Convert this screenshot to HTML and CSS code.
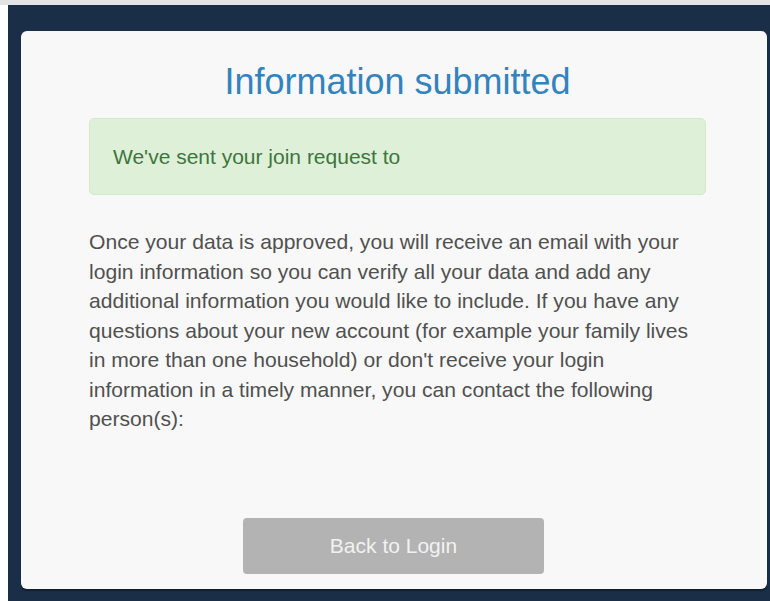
FILE: index.html
```html
<!DOCTYPE html>
<html lang="en">
<head>
<meta charset="utf-8">
<title>Information submitted</title>
<link rel="stylesheet" href="styles.css">
</head>
<body>
  <div class="screen">
    <div class="card">
      <div class="content">
        <h1 class="title">Information submitted</h1>
        <div class="alert">We've sent your join request to</div>
        <p class="message">Once your data is approved, you will receive an email with your login information so you can verify all your data and add any additional information you would like to include. If you have any questions about your new account (for example your family lives in more than one household) or don't receive your login information in a timely manner, you can contact the following person(s):</p>
        <div class="actions">
          <button class="btn" type="button">Back to Login</button>
        </div>
      </div>
    </div>
  </div>
</body>
</html>
```

FILE: styles.css
```css
html, body {
  margin: 0;
  padding: 0;
  height: 100%;
}

body {
  background: #ffffff;
  border-top: 5px solid #e4e4e4;
  box-sizing: border-box;
  font-family: "Liberation Sans", Arial, sans-serif;
  overflow: hidden;
}

.screen {
  margin-left: 8px;
  height: 100%;
  background: #1b2e47;
  padding: 26px 3px 0 13px;
  box-sizing: border-box;
}

.card {
  height: 558px;
  background: #f8f8f8;
  border-radius: 6px;
  box-shadow: 0 2px 1px rgba(0, 0, 0, 0.35);
  box-sizing: border-box;
  padding-left: 68px;
}

.content {
  width: 617px;
  display: flex;
  flex-direction: column;
  height: 100%;
}

.title {
  margin: 0;
  padding-top: 30px;
  text-align: center;
  font-weight: normal;
  font-size: 36px;
  line-height: 42px;
  color: #3383bd;
}

.alert {
  margin-top: 15px;
  height: 77px;
  box-sizing: border-box;
  padding: 0 23px;
  display: flex;
  align-items: center;
  background: #dff0d8;
  border: 1px solid #d6e9c6;
  border-radius: 5px;
  color: #3c763d;
  font-size: 21px;
}

.message {
  margin: 32px 0 0;
  font-size: 21.1px;
  line-height: 29.5px;
  color: #505050;
}

.actions {
  margin-top: auto;
  padding-bottom: 15px;
  display: flex;
  justify-content: center;
}

.btn {
  width: 301px;
  height: 56px;
  margin-right: 8px;
  border: none;
  border-radius: 4px;
  background: #b3b3b3;
  color: #f2f2f2;
  font-family: inherit;
  font-size: 21px;
}
```
